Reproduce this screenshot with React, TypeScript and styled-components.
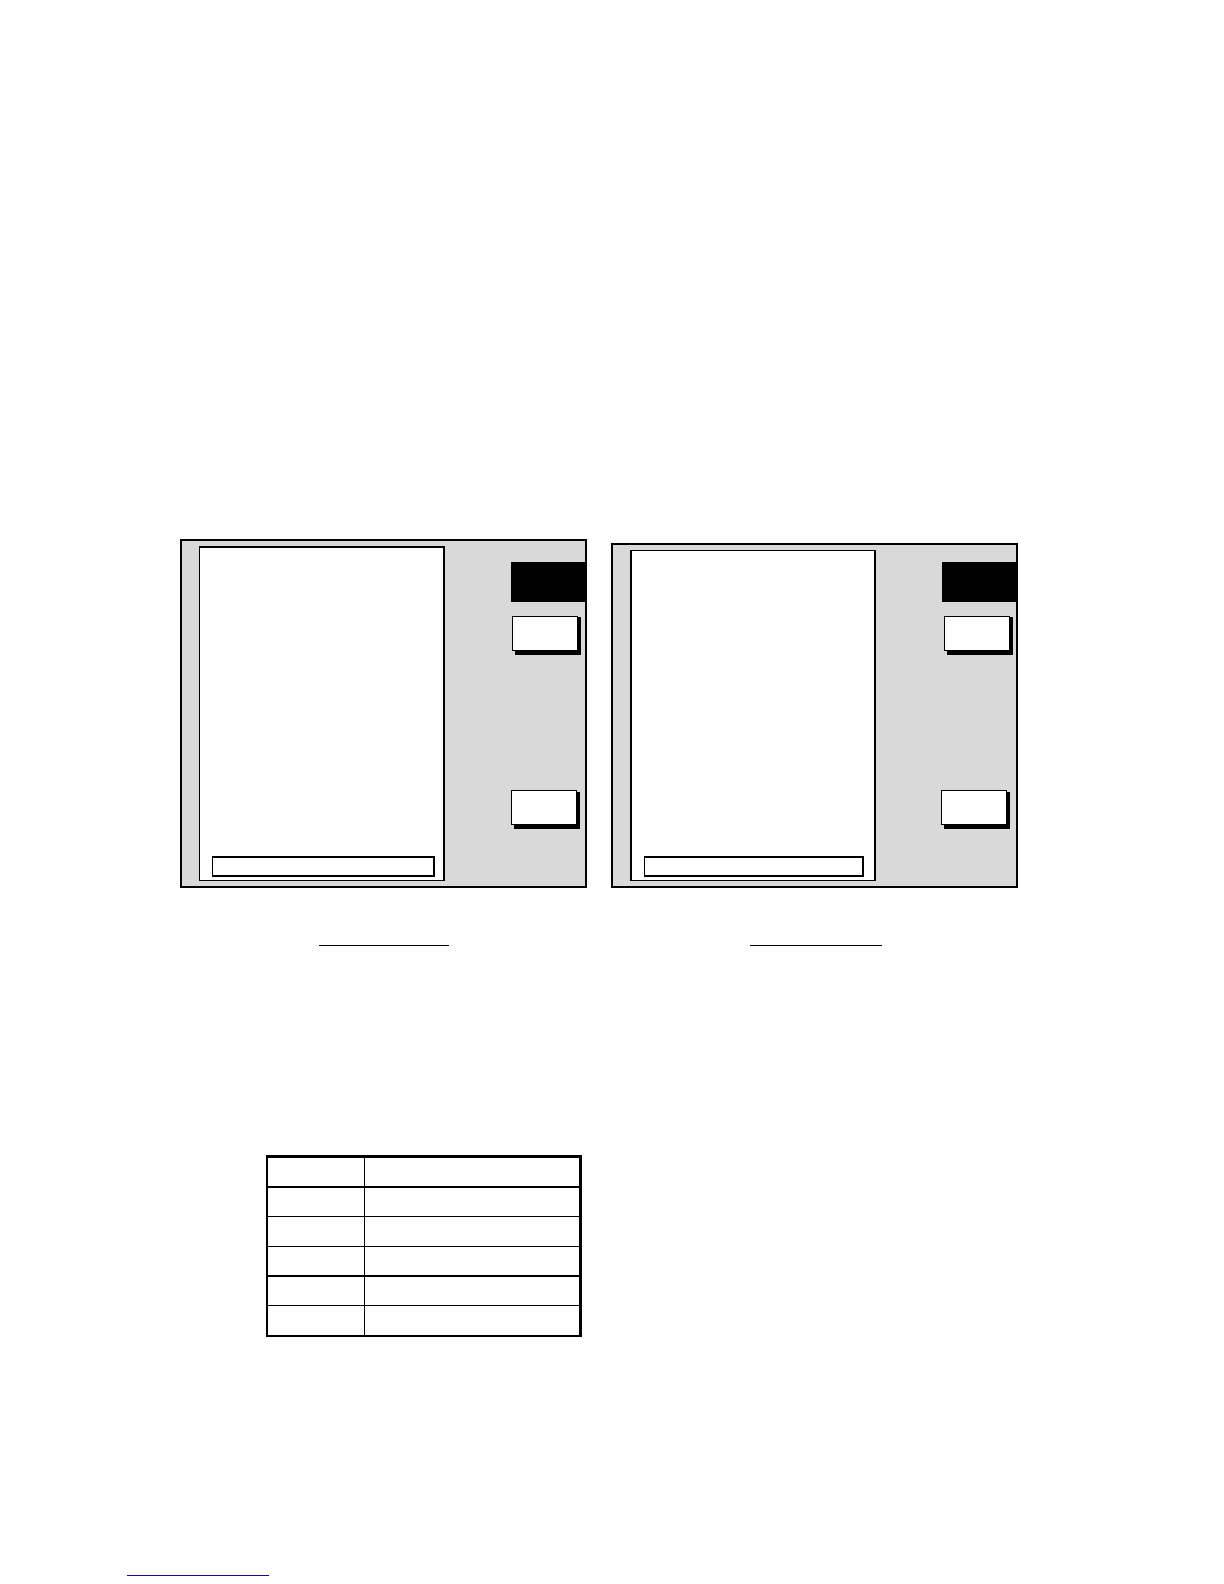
import React from "react";
import styled, { createGlobalStyle } from "styled-components";

const GlobalStyle = createGlobalStyle`
  *, *::before, *::after { box-sizing: border-box; }
  body {
    margin: 0;
    background: #fff;
    color: #000;
    font-family: "Liberation Sans", Arial, sans-serif;
    font-size: 14px;
  }
`;

const Page = styled.main`
  display: flex;
  flex-direction: column;
  min-height: 100vh;
  padding: 539px 206px 8px 180px;
`;

const Figures = styled.section`
  display: grid;
  grid-template-columns: minmax(0, 1fr) minmax(0, 1fr);
  align-items: end;
  gap: 24px;
`;

const Figure = styled.figure`
  margin: 0;
`;

const Screen = styled.div<{ $short?: boolean }>`
  display: flex;
  justify-content: space-between;
  height: ${(p) => (p.$short ? 345 : 349)}px;
  padding: 5px 0 5px 17px;
  border: 2px solid #000;
  background: #d9d9d9;
`;

const Display = styled.div<{ $borders: string; $inset: string }>`
  display: flex;
  align-items: flex-end;
  width: 246px;
  border: solid #000;
  border-width: ${(p) => p.$borders};
  padding: ${(p) => p.$inset};
  background: #fff;
`;

const Readout = styled.input`
  display: block;
  width: 100%;
  height: 21px;
  margin: 0;
  padding: 0 4px;
  border: solid #000;
  border-width: 2px 2px 2px 1px;
  border-radius: 0;
  background: #fff;
  font: inherit;
`;

const Keys = styled.div<{ $top: number }>`
  display: flex;
  flex-direction: column;
  width: 74px;
  padding-top: ${(p) => p.$top}px;
`;

const Title = styled.div`
  height: 40px;
  background: #000;
  color: #fff;
`;

const Key = styled.button<{ $before: number; $indent: number; $raised: number }>`
  width: 66px;
  height: 35px;
  margin: ${(p) => p.$before}px 0 0 ${(p) => p.$indent}px;
  padding: 0;
  border: 1px solid #000;
  border-radius: 0;
  background: #fff;
  box-shadow: 3px 4px 0 #000, 3px ${(p) => p.$raised}px 0 #000;
  font: inherit;
`;

const Caption = styled.figcaption<{ $width: number }>`
  width: ${(p) => p.$width}px;
  height: 58px;
  margin-left: 139px;
  border-bottom: 1px solid #000;
`;

const Table = styled.table`
  width: 316px;
  margin: 209px 0 0 86px;
  border: solid #000;
  border-width: 3px 3px 2px 2px;
  border-collapse: separate;
  border-spacing: 0;
  table-layout: fixed;
`;

const Cell = styled.td<{ $height: number; $rule: number }>`
  height: ${(p) => p.$height}px;
  padding: 0;
  border-bottom: ${(p) => p.$rule}px solid #000;

  &:first-child {
    width: 97px;
    border-right: 1px solid #000;
  }
`;

const FootLink = styled.a`
  width: 142px;
  height: 20px;
  margin: auto 0 0 -53px;
  border-bottom: 1px solid #120c8c;
  color: #120c8c;
  text-decoration: none;
`;

const screens = [
  { borders: "2px 2px 1px 1px", inset: "0 8px 3px 12px", top: 16, indent: 1, lower: 0, caption: 130 },
  { short: true, borders: "1px 2px 1px 2px", inset: "0 10px 3px 12px", top: 12, indent: 2, lower: -1, caption: 132 },
];

const rows = [
  { height: 30, rule: 2 },
  { height: 29, rule: 1 },
  { height: 30, rule: 1 },
  { height: 30, rule: 2 },
  { height: 29, rule: 1 },
  { height: 29, rule: 0 },
];

export default function App() {
  return (
    <>
      <GlobalStyle />
      <Page>
        <Figures>
          {screens.map((s, i) => (
            <Figure key={i}>
              <Screen $short={s.short}>
                <Display $borders={s.borders} $inset={s.inset}>
                  <Readout type="text" aria-label="Message" readOnly />
                </Display>
                <Keys $top={s.top}>
                  <Title />
                  <Key type="button" aria-label="Upper key" $before={14} $indent={s.indent} $raised={1} />
                  <Key type="button" aria-label="Lower key" $before={139} $indent={s.lower} $raised={2} />
                </Keys>
              </Screen>
              <Caption $width={s.caption} />
            </Figure>
          ))}
        </Figures>
        <Table>
          <tbody>
            {rows.map((r, i) => (
              <tr key={i}>
                <Cell $height={r.height} $rule={r.rule} />
                <Cell $height={r.height} $rule={r.rule} />
              </tr>
            ))}
          </tbody>
        </Table>
        <FootLink href="#" aria-label="Contents" />
      </Page>
    </>
  );
}
